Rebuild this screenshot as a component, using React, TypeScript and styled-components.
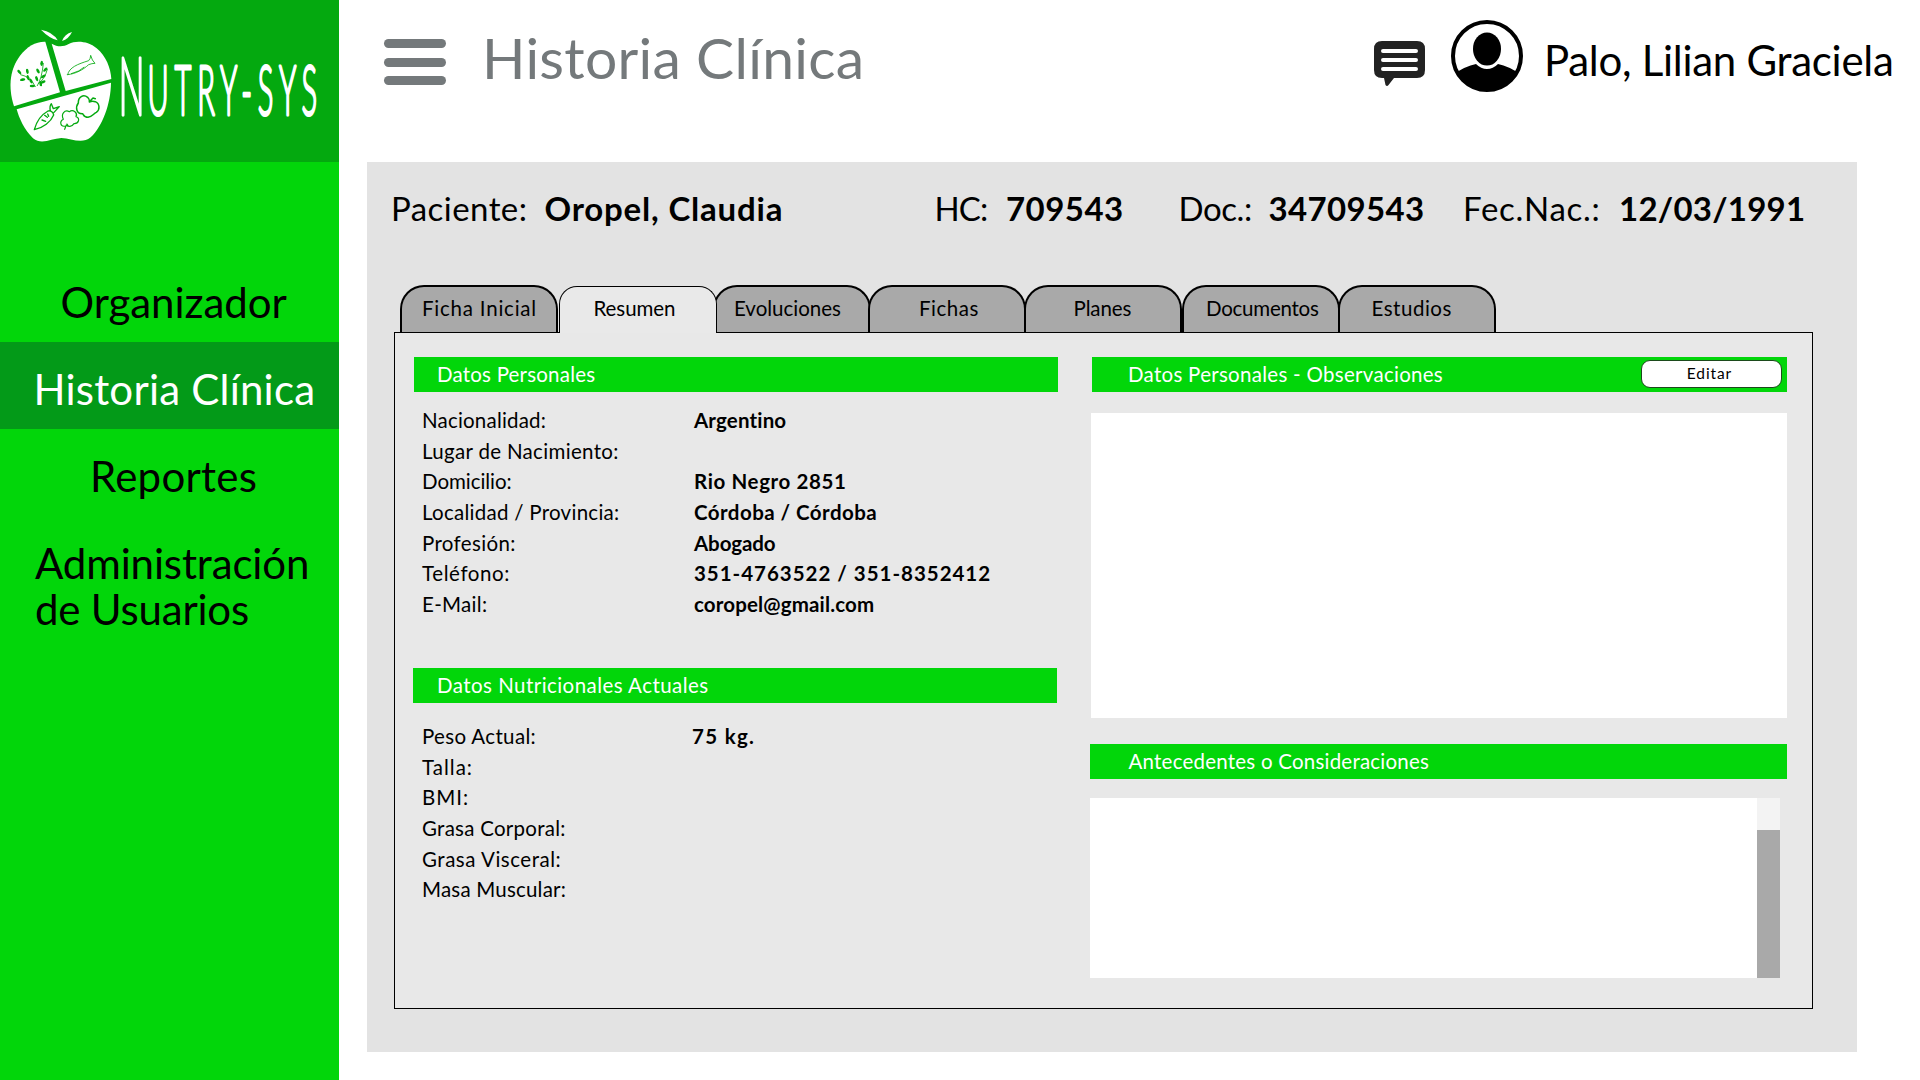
import React from "react";
import styled, { createGlobalStyle } from "styled-components";

const green = "#02d60a";

const GlobalStyle = createGlobalStyle`
  * { box-sizing: border-box; }
  body { margin: 0; background: #fff; overflow: hidden; }
`;

const Page = styled.div`
  display: flex;
  width: 1920px;
  height: 1080px;
  background: #fff;
  color: #000;
  font-family: Lato, "Open Sans", sans-serif;
`;

const Text = styled.span<{ $ls?: number }>`
  letter-spacing: ${(p) => p.$ls ?? 0}px;
  white-space: nowrap;
`;

/* Sidebar */
const Sidebar = styled.aside`
  flex: none;
  width: 339px;
  background: ${green};
`;
const Brand = styled.div`
  height: 162px;
  margin-bottom: 93px;
  background: #04a90f;
  svg { display: block; }
`;
const NavItem = styled.a<{ $active?: boolean; $left: number }>`
  display: flex;
  align-items: center;
  height: 87px;
  padding: 6px 0 0 ${(p) => p.$left}px;
  font-size: 42px;
  line-height: 46px;
  color: ${(p) => (p.$active ? "#fff" : "#000")};
  background: ${(p) => (p.$active ? "#039a18" : "transparent")};
`;
const NavBlock = styled(NavItem)`
  flex-direction: column;
  align-items: flex-start;
  height: auto;
  padding-top: 24px;
`;

/* Header */
const Main = styled.main`
  flex: 1;
  display: flex;
  flex-direction: column;
`;
const Header = styled.header`
  display: flex;
  align-items: flex-start;
  height: 162px;
  padding-left: 45px;
`;
const MenuButton = styled.div`
  display: flex;
  flex-direction: column;
  gap: 9.5px;
  width: 62px;
  margin-top: 39px;
`;
const MenuLine = styled.span`
  height: 9px;
  border-radius: 5px;
  background: #74797b;
`;
const Title = styled.h1`
  margin: 22px 0 0 36px;
  font-size: 57px;
  line-height: 70px;
  font-weight: 400;
  color: #74797b;
`;
const UserArea = styled.div`
  display: flex;
  margin-left: auto;
  width: 546px;
`;
const ChatIcon = styled.svg`
  width: 52px;
  height: 46px;
  margin-top: 41px;
`;
const Avatar = styled.svg`
  width: 72px;
  height: 73px;
  margin: 19.5px 0 0 25px;
`;
const UserName = styled.div`
  margin: 34.5px 0 0 21px;
  font-size: 42px;
  line-height: 50px;
`;

/* Panel */
const Panel = styled.section`
  width: 1490px;
  height: 890px;
  margin-left: 28px;
  background: #e3e3e3;
`;
const Patient = styled.div`
  display: grid;
  grid-template-columns: 153.5px 390px 71.5px 172.5px 90px 194.5px 156px 1fr;
  height: 123px;
  padding: 26px 0 0 24px;
  font-size: 33px;
  line-height: 40px;
`;
const Strong = styled(Text)`
  font-weight: 700;
`;

const Tabs = styled.div`
  display: flex;
  align-items: flex-end;
  height: 47px;
  padding-left: 33px;
`;
const Tab = styled.div<{ $shift?: number; $pad: number; $active?: boolean }>`
  flex: none;
  width: 158px;
  height: 47px;
  margin-left: ${(p) => p.$shift ?? 0}px;
  padding: 9px 0 0 ${(p) => p.$pad}px;
  border: solid #000;
  border-width: 2px 2px 0;
  border-radius: 24px 24px 0 0;
  background: #a9a9a9;
  font-size: 20.5px;
  line-height: 24px;
  ${(p) =>
    p.$active &&
    `
    position: relative;
    z-index: 1;
    margin-bottom: -1px;
    border-width: 1px 1px 0;
    border-radius: 18px 18px 0 0;
    background: #e9e9e9;
  `}
`;

const Content = styled.div`
  display: flex;
  width: 1419px;
  height: 677px;
  margin-left: 27px;
  padding: 24px 0 0 18px;
  border: 1px solid #000;
  background: #e8e8e8;
  font-size: 20.5px;
`;
const LeftColumn = styled.div`
  width: 645px;
  margin-right: 32px;
`;
const RightColumn = styled.div`
  width: 697px;
`;
const Bar = styled.h2<{ $indent?: number; $pad: number; $short?: boolean }>`
  display: flex;
  height: 35px;
  margin: 0 ${(p) => (p.$short ? 1 : 0)}px 0 ${(p) => p.$indent ?? 0}px;
  padding-left: ${(p) => p.$pad}px;
  background: ${green};
  color: #fff;
  font-size: 20.5px;
  line-height: 35px;
  font-weight: 400;
`;
const Fields = styled.dl<{ $top: number; $height: number; $termWidth: number }>`
  display: grid;
  grid-template-columns: ${(p) => p.$termWidth}px 1fr;
  grid-auto-rows: 30.65px;
  height: ${(p) => p.$height}px;
  margin: 0;
  padding: ${(p) => p.$top}px 0 0 9px;
  line-height: 30.65px;
`;
const Term = styled.dt<{ $ls: number }>`
  letter-spacing: ${(p) => p.$ls}px;
`;
const Value = styled.dd<{ $ls: number }>`
  margin: 0;
  font-weight: 700;
  letter-spacing: ${(p) => p.$ls}px;
  white-space: nowrap;
`;
const EditButton = styled.button`
  width: 141px;
  height: 28px;
  margin: 3px 5px 0 auto;
  padding: 0 4px 3px 0;
  border: 1.5px solid #1c4a1c;
  border-radius: 9px;
  background: #fff;
  color: #000;
  font: 400 15.5px/20px Lato, "Open Sans", sans-serif;
  letter-spacing: 0.9px;
`;
const Notes = styled.div`
  height: 305px;
  margin: 21px 0 26px 1px;
  background: #fff;
`;
const History = styled.div`
  display: flex;
  justify-content: flex-end;
  width: 690px;
  height: 180px;
  margin-top: 19px;
  background: #fff;
`;
const ScrollTrack = styled.div`
  width: 23px;
  padding-top: 32px;
  background: #f3f3f3;
`;
const ScrollThumb = styled.div`
  height: 148px;
  background: #a9a9a9;
`;

const Logo = () => (
  <svg width="339" height="162" viewBox="0 0 1017 486">
    <g fill="#fff">
      <path d="M123 89Q158 95 173 121Q148 115 123 89Z" />
      <path d="M216 96Q194 102 186 123Q206 117 216 96Z" />
      <path d="M136 125L180 277L42 319C22 255 32 205 60 167C82 138 108 124 136 125Z" />
      <path d="M155 131C172 141 190 141 206 132C228 121 264 123 290 145C318 168 332 204 334 237L197 273Z" />
      <path d="M50 328L333 248C332 312 308 378 272 412C246 434 214 415 184 414C154 415 126 436 99 415C72 388 57 354 50 328Z" />
    </g>
    <g fill="none" stroke="#04a90f" strokeWidth="2.5" strokeLinecap="round" strokeLinejoin="round">
      <path d="M62 224Q92 230 106 260M112 257Q126 235 130 190M116 250Q134 238 142 208" />
      <path d="M203 224C207 202 234 192 266 182Q272 176 272 166Q276 182 285 190Q276 190 266 194C248 210 228 221 203 224ZM214 221Q240 214 252 202" />
      <path strokeWidth="4" d="M103 389C110 362 126 343 144 333Q158 331 161 345C152 366 130 384 103 389ZM151 333Q148 318 154 311L160 326L178 320L162 337M134 346L142 352M126 360L137 364M143 342L146 349" />
      <path strokeWidth="3.5" d="M197 378C180 382 178 364 190 358C182 342 194 328 208 335C220 326 234 340 228 350C242 354 236 372 222 371C215 382 204 380 199 375L194 388M201 372L205 378" />
      <path strokeWidth="4.5" d="M235 309C234 291 250 281 263 292Q270 299 268 306Q276 302 286 305C300 311 300 330 289 337C280 341 277 350 264 352C252 352 251 345 248 341C228 342 226 321 235 309ZM268 305L279 294L286 296" />
    </g>
    <g fill="#04a90f">
      {[
        [58, 216, 50], [68, 239, -10], [82, 214, 80], [84, 233, 70], [97, 258, 0], [93, 243, 60],
        [110, 236, 70], [114, 213, 60], [125, 190, 95], [136, 209, -45], [130, 229, -30], [122, 251, 80], [129, 246, -20],
      ].map(([x, y, r]) => (
        <ellipse key={`${x}-${y}`} cx={x} cy={y} rx="8" ry="4" transform={`rotate(${r} ${x} ${y})`} />
      ))}
    </g>
    <g
      transform="scale(.42 1)"
      fill="#fff"
      stroke="#fff"
      strokeWidth="9"
      strokeLinejoin="round"
      fontFamily="Lato, sans-serif"
      fontWeight="300"
    >
      <text x="848" y="345" fontSize="243">N</text>
      <text x="1054" y="345" fontSize="208" letterSpacing="41.5">UTRY-SYS</text>
    </g>
  </svg>
);

const tabs: { label: string; ls: number; pad: number; shift?: number; active?: boolean }[] = [
  { label: "Ficha Inicial", ls: 0.78, pad: 20 },
  { label: "Resumen", ls: -0.08, pad: 33.5, shift: 1, active: true },
  { label: "Evoluciones", ls: -0.01, pad: 19, shift: -4 },
  { label: "Fichas", ls: 0.52, pad: 49, shift: -3 },
  { label: "Planes", ls: -0.11, pad: 47.5, shift: -2 },
  { label: "Documentos", ls: -0.25, pad: 22 },
  { label: "Estudios", ls: 0.52, pad: 31.5, shift: -2 },
];

type Row = [string, number, string?, number?];
const personal: Row[] = [
  ["Nacionalidad:", 0.2, "Argentino", 0.15],
  ["Lugar de Nacimiento:", 0.32],
  ["Domicilio:", -0.05, "Rio Negro 2851", 0.62],
  ["Localidad / Provincia:", 0.27, "Córdoba / Córdoba", 0.46],
  ["Profesión:", 0.35, "Abogado", -0.1],
  ["Teléfono:", 0.6, "351-4763522 / 351-8352412", 0.98],
  ["E-Mail:", 0.3, "coropel@gmail.com", 0.15],
];
const nutrition: Row[] = [
  ["Peso Actual:", 0.34, "75 kg.", 1.29],
  ["Talla:", 1],
  ["BMI:", 1],
  ["Grasa Corporal:", 0.26],
  ["Grasa Visceral:", 0.52],
  ["Masa Muscular:", 0.2],
];

const FieldList = ({ rows, ...box }: { rows: Row[]; $top: number; $height: number; $termWidth: number }) => (
  <Fields {...box}>
    {rows.map(([term, ls, value, valueLs]) => (
      <React.Fragment key={term}>
        <Term $ls={ls}>{term}</Term>
        <Value $ls={valueLs ?? 0}>{value}</Value>
      </React.Fragment>
    ))}
  </Fields>
);

export default function App() {
  return (
    <Page>
      <GlobalStyle />
      <Sidebar>
        <Brand><Logo /></Brand>
        <nav>
          <NavItem $left={60.5}><Text $ls={-0.04}>Organizador</Text></NavItem>
          <NavItem $left={33.5} $active><Text $ls={0.22}>Historia Clínica</Text></NavItem>
          <NavItem $left={90}><Text $ls={0.25}>Reportes</Text></NavItem>
          <NavBlock $left={35}>
            <Text $ls={-0.13}>Administración</Text>
            <Text $ls={-0.2}>de Usuarios</Text>
          </NavBlock>
        </nav>
      </Sidebar>
      <Main>
        <Header>
          <MenuButton><MenuLine /><MenuLine /><MenuLine /></MenuButton>
          <Title><Text $ls={0.3}>Historia Clínica</Text></Title>
          <UserArea>
            <ChatIcon viewBox="0 0 52 46">
              <path fill="#222" d="M8 0H43Q51 0 51 8V29Q51 37 43 37H20L14.5 44Q13 46 11.5 44L10 37H8Q0 37 0 29V8Q0 0 8 0Z" />
              <path stroke="#fff" strokeWidth="4" strokeLinecap="round" d="M9 10H42M9 19H42M9 28H42" />
            </ChatIcon>
            <Avatar viewBox="0 0 72 73">
              <defs>
                <clipPath id="avatar-clip"><circle cx="36" cy="36" r="35" /></clipPath>
              </defs>
              <circle cx="36" cy="36" r="34" fill="#fff" stroke="#000" strokeWidth="4" />
              <ellipse cx="36" cy="29" rx="14" ry="16.5" />
              <path clipPath="url(#avatar-clip)" d="M0 56Q14 46 25 44Q30 49 36 49Q42 49 47 44Q58 46 72 56V74H0Z" />
            </Avatar>
            <UserName><Text $ls={-0.28}>Palo, Lilian Graciela</Text></UserName>
          </UserArea>
        </Header>
        <Panel>
          <Patient>
            <Text $ls={0.45}>Paciente:</Text>
            <Strong $ls={0.8}>Oropel, Claudia</Strong>
            <Text $ls={-0.87}>HC:</Text>
            <Strong $ls={0.46}>709543</Strong>
            <Text $ls={-0.41}>Doc.:</Text>
            <Strong $ls={0.36}>34709543</Strong>
            <Text $ls={0.7}>Fec.Nac.:</Text>
            <Strong $ls={0.25}>12/03/1991</Strong>
          </Patient>
          <Tabs>
            {tabs.map((t) => (
              <Tab key={t.label} $shift={t.shift} $pad={t.pad} $active={t.active}>
                <Text $ls={t.ls}>{t.label}</Text>
              </Tab>
            ))}
          </Tabs>
          <Content>
            <LeftColumn>
              <Bar $indent={1} $pad={23}><Text $ls={0.2}>Datos Personales</Text></Bar>
              <FieldList rows={personal} $top={13.2} $height={276} $termWidth={272} />
              <Bar $pad={24} $short><Text $ls={0.45}>Datos Nutricionales Actuales</Text></Bar>
              <FieldList rows={nutrition} $top={18} $height={220} $termWidth={270} />
            </LeftColumn>
            <RightColumn>
              <Bar $indent={2} $pad={36}>
                <Text $ls={0.28}>Datos Personales - Observaciones</Text>
                <EditButton>Editar</EditButton>
              </Bar>
              <Notes />
              <Bar $pad={38.5}><Text $ls={0.22}>Antecedentes o Consideraciones</Text></Bar>
              <History>
                <ScrollTrack><ScrollThumb /></ScrollTrack>
              </History>
            </RightColumn>
          </Content>
        </Panel>
      </Main>
    </Page>
  );
}
